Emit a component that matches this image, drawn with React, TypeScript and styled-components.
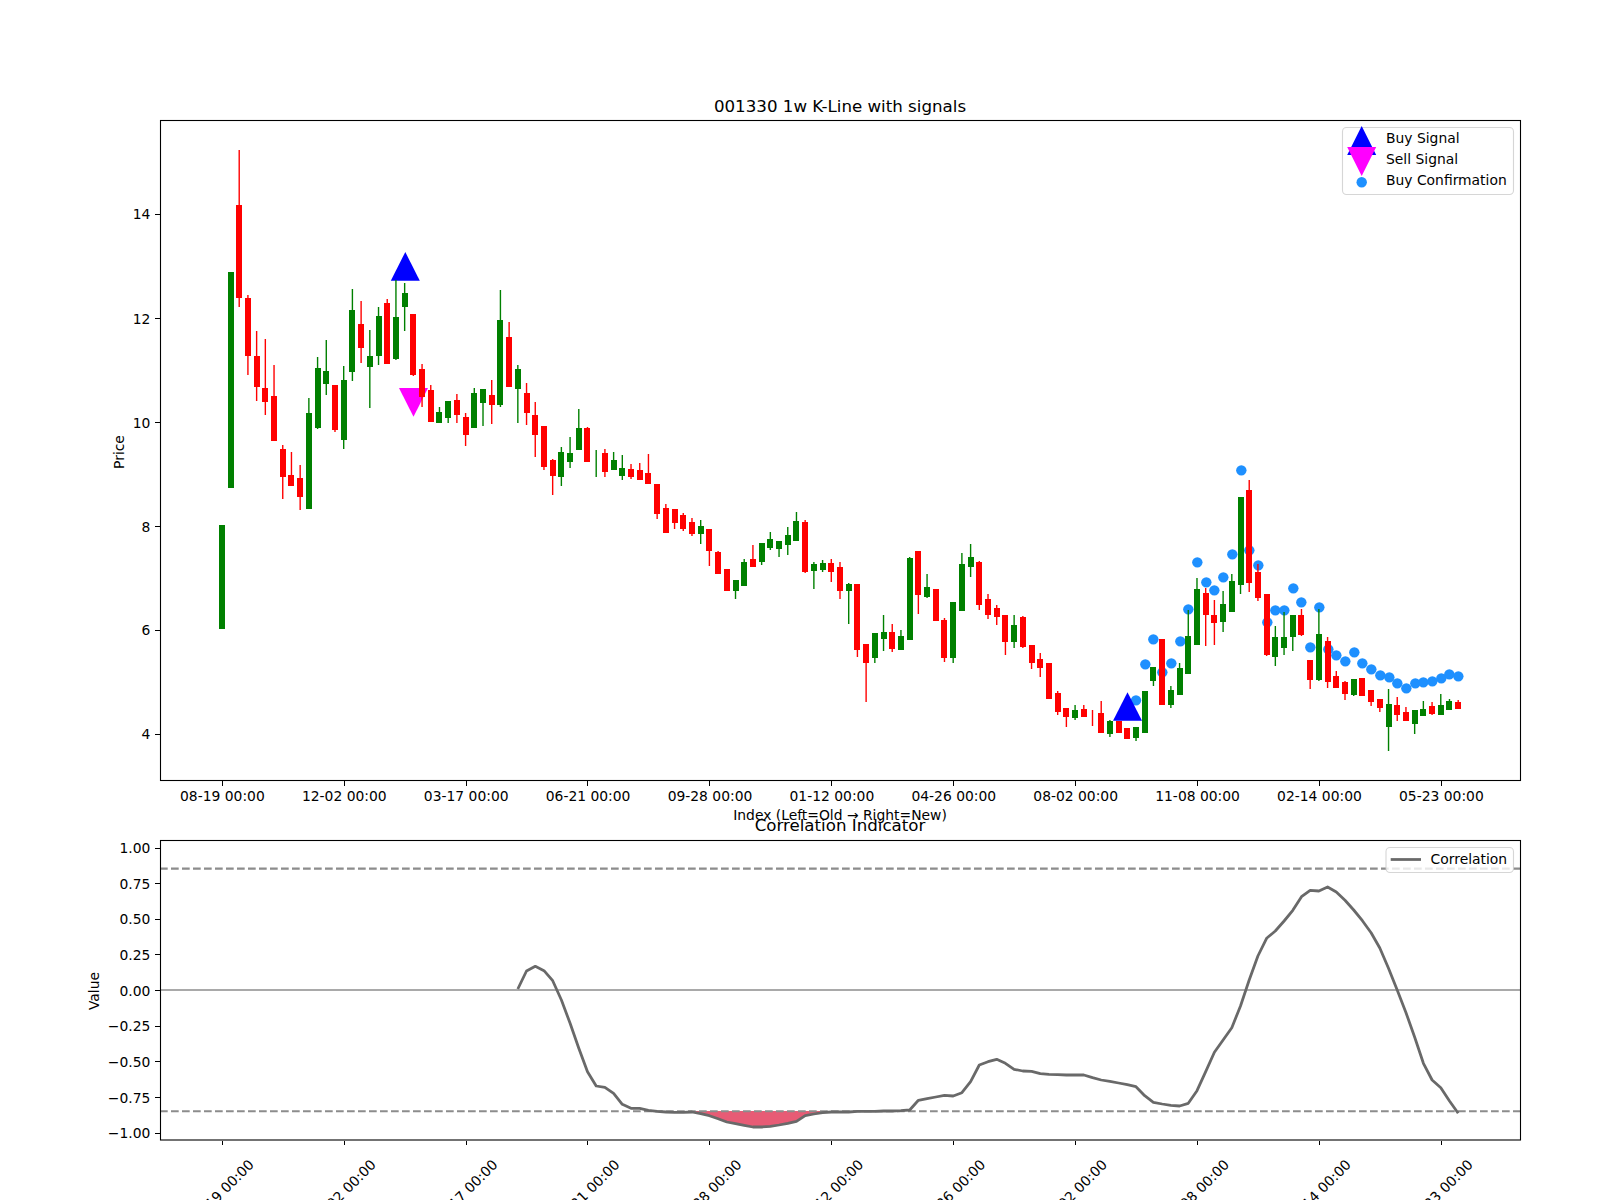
import React from "react";
import styled, { createGlobalStyle } from "styled-components";

const GlobalStyle = createGlobalStyle`
  html, body { margin: 0; padding: 0; background: #ffffff; overflow: hidden; }
`;

const Page = styled.main`
  width: 1600px;
  height: 1200px;
  overflow: hidden;
  background: #ffffff;
  display: flex;
  flex-direction: column;
`;

const ChartSvg = styled.svg`
  display: block;
  flex: none;
  width: 1600px;
  overflow: visible;
`;

const AxesFrame = styled.rect`
  fill: none;
  stroke: #000000;
  stroke-width: 1.1;
`;

const TickMark = styled.line`
  stroke: #000000;
  stroke-width: 1;
  shape-rendering: crispEdges;
`;

const TickLabel = styled.text`
  font-family: "DejaVu Sans", sans-serif;
  font-size: 13.89px;
  fill: #000000;
`;

const PlotTitle = styled.text`
  font-family: "DejaVu Sans", sans-serif;
  font-size: 16.67px;
  fill: #000000;
  text-anchor: middle;
`;

const Wick = styled.line<{ $up: boolean }>`
  stroke: ${(p) => (p.$up ? "#008000" : "#ff0000")};
  stroke-width: 1.4;
`;

const CandleBody = styled.rect<{ $up: boolean }>`
  fill: ${(p) => (p.$up ? "#008000" : "#ff0000")};
`;

const ConfirmDot = styled.circle`
  fill: #1e90ff;
`;

const SignalMark = styled.polygon<{ $sell?: boolean }>`
  fill: ${(p) => (p.$sell ? "#ff00ff" : "#0000ff")};
`;

const LegendBox = styled.rect`
  fill: rgba(255, 255, 255, 0.8);
  stroke: rgba(204, 204, 204, 0.8);
  stroke-width: 1.1;
`;

const ThresholdLine = styled.line`
  stroke: #8c8c8c;
  stroke-width: 2.08;
  stroke-dasharray: 7.7 3.3;
`;

const ZeroLine = styled.line`
  stroke: #a9a9a9;
  stroke-width: 2.08;
`;

const CorrelationLine = styled.polyline`
  fill: none;
  stroke: #696969;
  stroke-width: 2.78;
  stroke-linejoin: round;
`;

const LegendSample = styled.line`
  stroke: #696969;
  stroke-width: 2.78;
`;

const ExtremeFill = styled.path`
  fill: #e75b75;
`;

type Candle = [string, number, number, number, number];

const candles: Candle[] = [
  ["g", 525, 525, 629, 629],
  ["g", 272, 272, 488, 488],
  ["r", 150, 205, 298, 307],
  ["r", 295, 298, 356, 375],
  ["r", 331, 356, 387, 401],
  ["r", 339, 388, 402, 415],
  ["r", 365, 396, 441, 441],
  ["r", 445, 449, 477, 499],
  ["r", 452, 475, 486, 486],
  ["r", 465, 478, 497, 510],
  ["g", 398, 413, 509, 509],
  ["g", 357, 368, 428, 429],
  ["g", 340, 371, 384, 395],
  ["r", 385, 385, 430, 432],
  ["g", 366, 380, 440, 449],
  ["g", 289, 310, 372, 381],
  ["r", 301, 324, 348, 363],
  ["g", 330, 356, 367, 408],
  ["g", 307, 316, 356, 365],
  ["r", 299, 303, 364, 364],
  ["g", 280, 317, 359, 360],
  ["g", 283, 293, 307, 331],
  ["r", 314, 314, 375, 376],
  ["r", 364, 369, 397, 407],
  ["r", 385, 390, 422, 422],
  ["g", 407, 412, 423, 423],
  ["g", 401, 401, 418, 423],
  ["r", 394, 400, 415, 423],
  ["r", 413, 417, 435, 446],
  ["g", 388, 393, 428, 428],
  ["g", 389, 389, 403, 426],
  ["r", 380, 395, 405, 424],
  ["g", 290, 320, 405, 407],
  ["r", 322, 337, 387, 387],
  ["g", 365, 369, 389, 423],
  ["r", 383, 393, 413, 425],
  ["r", 402, 415, 435, 457],
  ["r", 426, 426, 467, 470],
  ["r", 459, 460, 476, 495],
  ["g", 447, 452, 477, 486],
  ["g", 437, 453, 462, 468],
  ["g", 409, 428, 450, 450],
  ["r", 427, 428, 462, 462],
  ["g", 450, 463, 463, 477],
  ["r", 449, 453, 472, 477],
  ["g", 452, 460, 470, 470],
  ["g", 455, 468, 476, 480],
  ["r", 464, 469, 477, 479],
  ["r", 463, 470, 480, 480],
  ["r", 454, 473, 484, 484],
  ["r", 484, 484, 514, 519],
  ["r", 504, 508, 533, 533],
  ["r", 509, 509, 523, 529],
  ["r", 513, 515, 529, 531],
  ["r", 518, 522, 534, 536],
  ["g", 520, 526, 534, 544],
  ["r", 529, 529, 551, 566],
  ["r", 551, 552, 574, 574],
  ["r", 569, 569, 591, 591],
  ["g", 580, 580, 591, 599],
  ["g", 559, 562, 586, 586],
  ["r", 545, 559, 567, 567],
  ["g", 543, 543, 562, 565],
  ["g", 532, 539, 548, 550],
  ["g", 541, 541, 549, 557],
  ["g", 527, 535, 545, 555],
  ["g", 512, 521, 541, 541],
  ["r", 520, 522, 572, 573],
  ["g", 562, 564, 571, 589],
  ["g", 560, 563, 570, 572],
  ["r", 559, 563, 572, 582],
  ["r", 562, 567, 591, 599],
  ["g", 583, 584, 591, 624],
  ["r", 584, 584, 650, 657],
  ["r", 644, 644, 663, 702],
  ["g", 633, 633, 658, 663],
  ["g", 615, 632, 639, 651],
  ["r", 624, 632, 649, 652],
  ["g", 630, 636, 650, 650],
  ["g", 557, 558, 640, 640],
  ["r", 551, 551, 595, 614],
  ["g", 574, 587, 597, 598],
  ["r", 589, 589, 621, 621],
  ["r", 618, 620, 658, 662],
  ["g", 602, 602, 658, 663],
  ["g", 553, 564, 611, 611],
  ["g", 544, 557, 567, 577],
  ["r", 561, 562, 605, 610],
  ["r", 594, 599, 615, 619],
  ["r", 605, 608, 617, 625],
  ["r", 615, 615, 642, 655],
  ["g", 615, 625, 642, 648],
  ["r", 616, 617, 647, 648],
  ["r", 645, 645, 663, 669],
  ["r", 653, 659, 668, 677],
  ["r", 663, 663, 699, 699],
  ["r", 691, 693, 712, 715],
  ["r", 708, 708, 717, 727],
  ["g", 705, 710, 718, 720],
  ["r", 705, 709, 717, 717],
  ["r", 710, 718, 718, 726],
  ["r", 701, 713, 733, 733],
  ["g", 720, 721, 734, 737],
  ["r", 721, 721, 733, 733],
  ["r", 728, 728, 739, 739],
  ["g", 727, 727, 738, 741],
  ["g", 691, 691, 733, 733],
  ["g", 667, 667, 681, 686],
  ["r", 639, 639, 705, 705],
  ["g", 686, 690, 705, 708],
  ["g", 663, 668, 695, 695],
  ["g", 610, 636, 674, 674],
  ["g", 578, 589, 645, 645],
  ["r", 588, 593, 615, 646],
  ["r", 600, 615, 623, 645],
  ["g", 591, 604, 622, 632],
  ["g", 574, 581, 612, 612],
  ["g", 497, 497, 585, 594],
  ["r", 480, 490, 583, 592],
  ["r", 564, 572, 598, 601],
  ["r", 594, 594, 655, 656],
  ["g", 626, 637, 657, 666],
  ["g", 612, 637, 648, 655],
  ["g", 615, 615, 637, 651],
  ["r", 609, 615, 635, 636],
  ["r", 660, 660, 680, 689],
  ["g", 609, 634, 680, 681],
  ["r", 637, 641, 682, 688],
  ["r", 671, 676, 688, 688],
  ["r", 681, 682, 694, 700],
  ["g", 679, 679, 695, 696],
  ["r", 678, 678, 696, 696],
  ["r", 690, 690, 702, 706],
  ["r", 699, 699, 708, 712],
  ["g", 689, 704, 727, 751],
  ["r", 697, 705, 715, 721],
  ["r", 707, 712, 721, 721],
  ["g", 710, 710, 724, 734],
  ["g", 701, 709, 716, 716],
  ["r", 702, 706, 714, 715],
  ["g", 694, 705, 715, 715],
  ["g", 699, 701, 710, 710],
  ["r", 700, 702, 709, 709],
];

const candleX = (i: number) => 221.8 + 8.707 * i;

const dots: [number, number][] = [
  [48, 751], [76, 643], [100, 568], [127, 667], [154, 640], [181, 574], [205, 478], [232, 337],
  [259, 397], [283, 421], [310, 382], [337, 313], [364, 61], [388, 301], [415, 346], [442, 517],
  [466, 481], [493, 481], [520, 415], [544, 457], [571, 592], [598, 472], [625, 598], [649, 616],
  [676, 634], [703, 607], [727, 640], [754, 658], [781, 676], [808, 682], [832, 700], [859, 715],
  [886, 700], [910, 697], [937, 694], [964, 685], [988, 673], [1015, 679],
];

const corrY: number[] = [
  ...[657, 603, 589, 602, 632, 690, 760, 835, 905, 948].map((v) => 770 + v / 3),
  ...[
    142, 160, 193, 205, 205, 211, 214, 216, 217, 217, 216, 221, 227, 236, 246, 251, 256, 261, 261, 259,
    255, 250, 244, 227, 222, 218, 216, 216, 216, 214, 214, 214, 213, 213, 212, 210, 181, 176, 171, 166,
    168, 158, 125, 75, 65, 58,
  ].map((v) => 1040 + v / 3),
  ...[
    730, 748, 753, 754, 761, 763, 764, 765, 765, 765, 773, 780, 784, 789, 794, 800, 827, 847, 852, 856,
    858, 850, 812, 755, 697, 660, 623, 558, 480, 408, 355, 333, 303, 271, 230, 211, 213, 201, 216, 241,
    270, 302, 338, 384, 445, 510, 578, 652, 730, 780, 803, 843, 880,
  ].map((v) => 820 + v / 3),
];

const corrPoints = corrY.map((y, k) => [candleX(k + 34), y] as const);
const extremePart = corrPoints.slice(54 - 34, 71 - 34);
const extremePath =
  `M${candleX(54).toFixed(1)} 1111 ` +
  extremePart.map(([x, y]) => `L${x.toFixed(1)} ${y.toFixed(1)}`).join(" ") +
  ` L${candleX(70).toFixed(1)} 1111 Z`;

const dateLabels = [
  "08-19 00:00", "12-02 00:00", "03-17 00:00", "06-21 00:00", "09-28 00:00", "01-12 00:00",
  "04-26 00:00", "08-02 00:00", "11-08 00:00", "02-14 00:00", "05-23 00:00",
];

const priceTicks: [string, number][] = [
  ["14", 214], ["12", 318.5], ["10", 422.5], ["8", 526.5], ["6", 630], ["4", 734],
];

const valueTicks = ["1.00", "0.75", "0.50", "0.25", "0.00", "−0.25", "−0.50", "−0.75", "−1.00"].map(
  (label, k) => [label, 848 + 35.66 * k] as const
);

const Triangle: React.FC<{ cx: number; base: number; tip: number; sell?: boolean }> = ({ cx, base, tip, sell }) => (
  <SignalMark $sell={sell} points={`${cx - 14.5},${base} ${cx + 14.5},${base} ${cx},${tip}`} />
);

const PriceChart: React.FC = () => (
  <ChartSvg height={800} viewBox="0 0 1600 800" role="img" aria-label="Price chart">
    <PlotTitle x={840} y={111.6}>001330 1w K-Line with signals</PlotTitle>
    {dots.map(([u, v], k) => (
      <ConfirmDot key={k} cx={1120 + u / 3} cy={450 + v / 3} r={5.2} />
    ))}
    <Triangle cx={405.3} base={280.7} tip={252} />
    <Triangle cx={413.5} base={388} tip={416.7} sell />
    <Triangle cx={1127.5} base={720.7} tip={692.3} />
    {candles.map(([c, wt, bt, bb, wb], i) => {
      const cx = candleX(i);
      return (
        <g key={i}>
          {(wt < bt || wb > bb || bt === bb) && <Wick $up={c === "g"} x1={cx} x2={cx} y1={wt} y2={wb} />}
          {bb > bt && <CandleBody $up={c === "g"} x={Math.round(cx - 3)} width={6} y={bt} height={bb - bt} />}
        </g>
      );
    })}
    <AxesFrame x={160.5} y={120.5} width={1360} height={660} />
    {priceTicks.map(([label, y]) => (
      <g key={label}>
        <TickMark x1={155.2} x2={160} y1={y} y2={y} />
        <TickLabel x={150.3} y={y + 5} textAnchor="end">{label}</TickLabel>
      </g>
    ))}
    <TickLabel x={124} y={452} textAnchor="middle" transform="rotate(-90 124 452)">Price</TickLabel>
    {dateLabels.map((label, k) => {
      const x = candleX(k * 14);
      const tx = Math.round(x) + 0.5;
      return (
        <g key={label}>
          <TickMark x1={tx} x2={tx} y1={781} y2={785.8} />
          <TickLabel x={x + 0.6} y={801.4} textAnchor="middle">{label}</TickLabel>
        </g>
      );
    })}
    <TickLabel x={840} y={820} textAnchor="middle">Index (Left=Old → Right=New)</TickLabel>
    <LegendBox x={1342.5} y={127.5} width={171} height={67} rx={4} />
    <Triangle cx={1361.7} base={155} tip={126} />
    <Triangle cx={1361.7} base={147} tip={176} sell />
    <ConfirmDot cx={1361.7} cy={182.3} r={5.2} />
    <TickLabel x={1386} y={143}>Buy Signal</TickLabel>
    <TickLabel x={1386} y={164}>Sell Signal</TickLabel>
    <TickLabel x={1386} y={185}>Buy Confirmation</TickLabel>
  </ChartSvg>
);

const CorrelationChart: React.FC = () => (
  <ChartSvg height={400} viewBox="0 800 1600 400" role="img" aria-label="Correlation chart">
    <defs>
      <clipPath id="below-threshold">
        <rect x={160} y={1111} width={1360} height={29} />
      </clipPath>
    </defs>
    <PlotTitle x={840} y={830.7}>Correlation Indicator</PlotTitle>
    <ExtremeFill d={extremePath} clipPath="url(#below-threshold)" />
    <ThresholdLine x1={160} x2={1520} y1={868.6} y2={868.6} />
    <ThresholdLine x1={160} x2={1520} y1={1111.2} y2={1111.2} />
    <ZeroLine x1={160} x2={1520} y1={990} y2={990} />
    <CorrelationLine points={corrPoints.map(([x, y]) => `${x.toFixed(1)},${y.toFixed(1)}`).join(" ")} />
    <AxesFrame x={160.5} y={840.5} width={1360} height={299.5} />
    {valueTicks.map(([label, y]) => (
      <g key={label}>
        <TickMark x1={155.2} x2={160} y1={y} y2={y} />
        <TickLabel x={150.3} y={y + 5} textAnchor="end">{label}</TickLabel>
      </g>
    ))}
    <TickLabel x={99.4} y={991} textAnchor="middle" transform="rotate(-90 99.4 991)">Value</TickLabel>
    {dateLabels.map((label, k) => {
      const x = candleX(k * 14);
      const tx = Math.round(x) + 0.5;
      return (
        <g key={label}>
          <TickMark x1={tx} x2={tx} y1={1140.5} y2={1145.3} />
          <TickLabel x={x - 0.5} y={1192 + 5} textAnchor="middle" transform={`rotate(-45 ${x - 0.5} 1192)`}>
            {label}
          </TickLabel>
        </g>
      );
    })}
    <LegendBox x={1386} y={847.5} width={127.5} height={25} rx={4} />
    <LegendSample x1={1390.7} x2={1421} y1={859.5} y2={859.5} />
    <TickLabel x={1430.6} y={864}>Correlation</TickLabel>
  </ChartSvg>
);

export default function App() {
  return (
    <Page>
      <GlobalStyle />
      <PriceChart />
      <CorrelationChart />
    </Page>
  );
}
